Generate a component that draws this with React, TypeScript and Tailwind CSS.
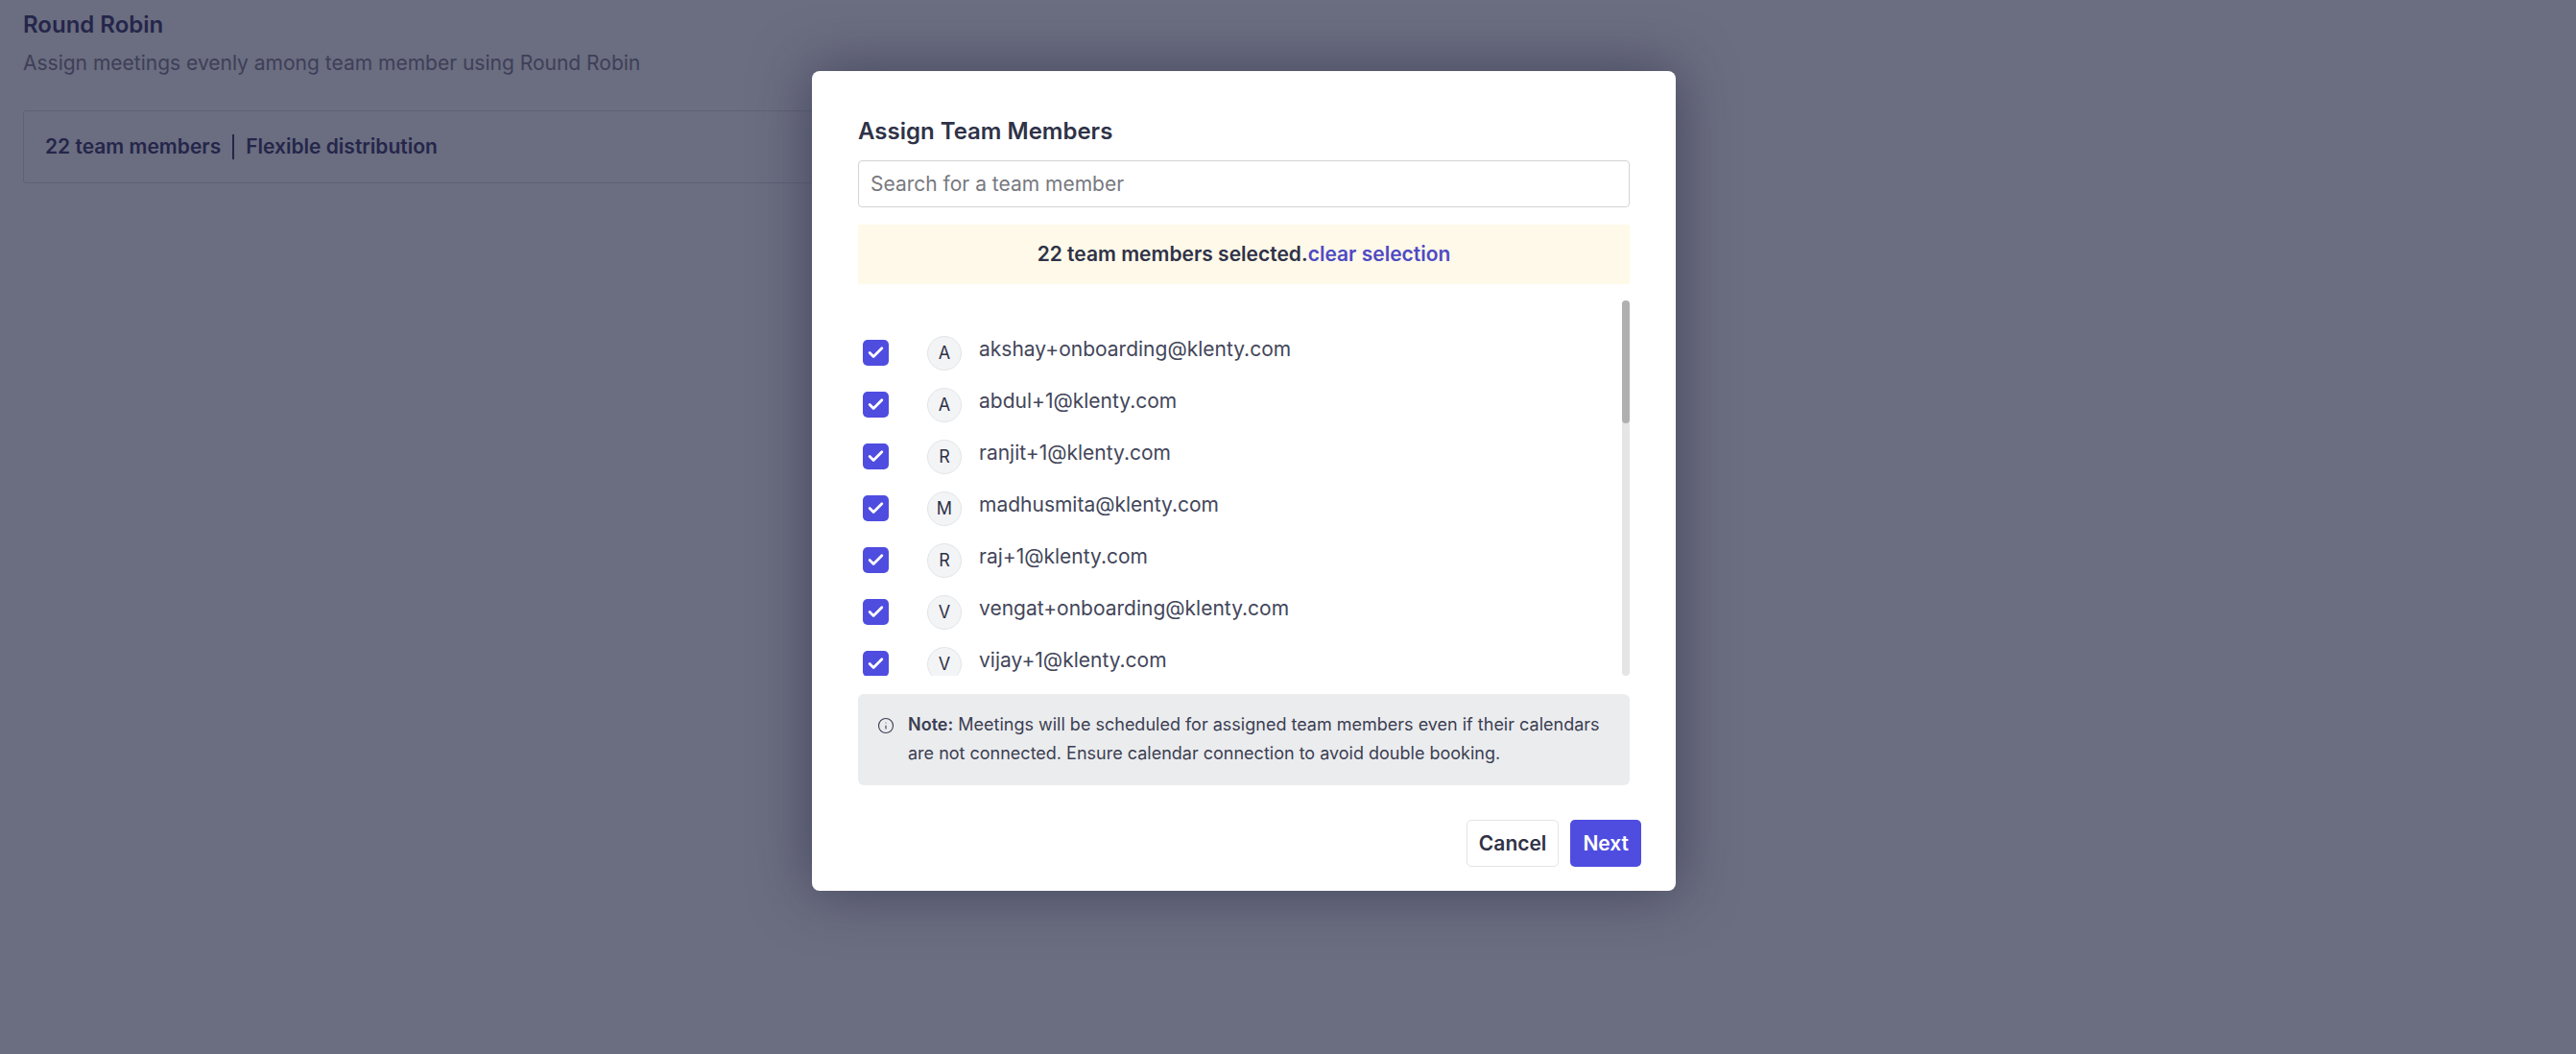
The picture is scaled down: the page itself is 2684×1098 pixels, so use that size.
import { Check, Info } from "lucide-react";

const members = [
  { initial: "A", email: "akshay+onboarding@klenty.com" },
  { initial: "A", email: "abdul+1@klenty.com" },
  { initial: "R", email: "ranjit+1@klenty.com" },
  { initial: "M", email: "madhusmita@klenty.com" },
  { initial: "R", email: "raj+1@klenty.com" },
  { initial: "V", email: "vengat+onboarding@klenty.com" },
  { initial: "V", email: "vijay+1@klenty.com" },
];

function MemberRow({ initial, email }: { initial: string; email: string }) {
  return (
    <div className="flex h-[54px] shrink-0 items-center">
      <div className="ml-[5px] mt-[3px] flex h-[27px] w-[27px] items-center justify-center rounded-[5px] bg-[#4f4ddf]">
        <Check className="h-[19px] w-[19px] text-white" strokeWidth={3.5} />
      </div>
      <div className="ml-[40px] mt-[3px] flex h-[36px] w-[36px] items-center justify-center rounded-full border border-[#e3e4e8] bg-[#f3f4f6] text-[18px] text-[#2f3247]">
        {initial}
      </div>
      <div className="ml-[18px] mb-[4px] text-[21px] leading-[28px] text-[#43465a]">{email}</div>
    </div>
  );
}

export default function App() {
  return (
    <div className="relative h-[1098px] w-[2684px] overflow-hidden bg-[#6b6d80] font-['Inter',sans-serif]">
      {/* page behind the dialog */}
      <div className="px-6 pt-3">
        <h2 className="text-[24px] leading-[28px] font-semibold text-[#24264a]">Round Robin</h2>
        <p className="mt-[11px] text-[21px] leading-[30px] text-[#3d3f58]">
          Assign meetings evenly among team member using Round Robin
        </p>
        <div className="mt-[34px] flex h-[76px] w-[1000px] items-center rounded-[3px] border border-[#5f6175] px-[22px]">
          <span className="text-[21px] font-semibold text-[#24264a]">22 team members</span>
          <span className="mx-[12px] h-[26px] w-[2px] bg-[#24264a]" />
          <span className="text-[21px] font-semibold text-[#24264a]">Flexible distribution</span>
        </div>
      </div>

      {/* dialog */}
      <div className="absolute left-[846px] top-[74px] flex h-[854px] w-[900px] flex-col rounded-[8px] bg-white px-12 pt-[47px] shadow-[0_0_60px_rgba(40,44,70,0.6)]">
        <h3 className="text-[24px] leading-[32px] font-semibold text-[#2f3247]">Assign Team Members</h3>
        <div className="mt-[14px] flex h-[49px] items-center rounded-[4px] border border-[#d2d3d6] px-3 text-[21px] text-[#78797f]">
          Search for a team member
        </div>
        <div className="mt-[18px] flex h-[62px] items-center justify-center bg-[#fff9e9] text-[21px] font-semibold text-[#2f3247]">
          22 team members selected.<span className="text-[#4f4ac4]">clear selection</span>
        </div>
        <div className="relative mt-[17px] h-[391px] overflow-hidden pt-[26px]">
          {members.map((m) => (
            <MemberRow key={m.email} initial={m.initial} email={m.email} />
          ))}
          <div className="absolute right-0 top-0 h-full w-[8px] rounded-full bg-[#e5e5e5]">
            <div className="h-[128px] w-[8px] rounded-full bg-[#b0b0b0]" />
          </div>
        </div>
        <div className="mt-[19px] flex h-[95px] gap-[14px] rounded-[6px] bg-[#ebecee] pl-[20px] pt-[17px] text-[18px] leading-[30px] text-[#3b3e52]">
          <Info className="mt-[7px] h-[18px] w-[18px] shrink-0" strokeWidth={1.5} />
          <div>
            <span className="font-semibold">Note:</span> Meetings will be scheduled for assigned team members even if their calendars
            <br />
            are not connected. Ensure calendar connection to avoid double booking.
          </div>
        </div>
        <div className="-mr-3 mt-[36px] flex justify-end gap-[12px]">
          <button className="h-[49px] rounded-[5px] border border-[#e3e4e8] bg-white px-[12px] text-[21px] font-semibold text-[#2f3247]">
            Cancel
          </button>
          <button className="h-[49px] rounded-[5px] bg-[#4f4ddf] px-[13px] text-[21px] font-semibold text-white">Next</button>
        </div>
      </div>
    </div>
  );
}
